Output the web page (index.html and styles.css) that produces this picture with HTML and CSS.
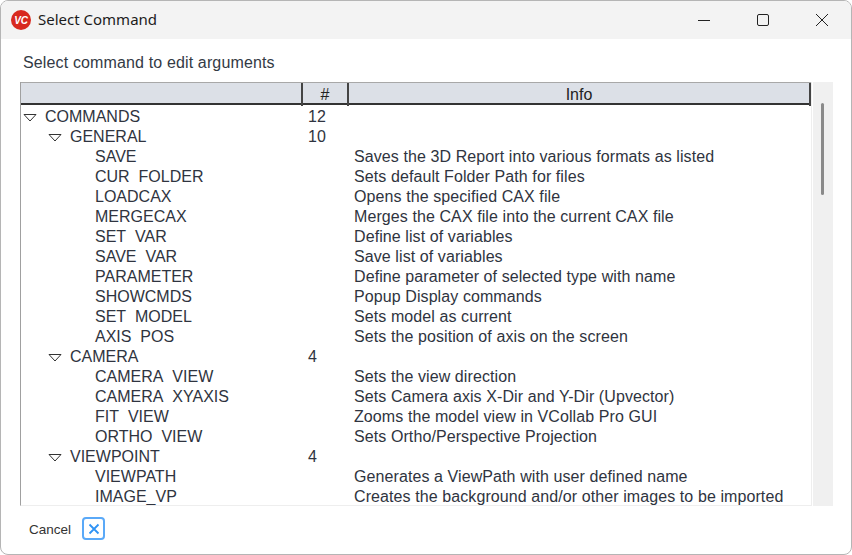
FILE: index.html
```html
<!DOCTYPE html>
<html lang="en">
<head>
<meta charset="utf-8">
<title>Select Command</title>
<link rel="stylesheet" href="styles.css">
</head>
<body>
<div class="window">
  <header class="titlebar">
    <div class="logo"><span>VC</span></div>
    <div class="title">Select Command</div>
    <div class="winctrls">
      <svg class="ctrl" width="14" height="14" viewBox="0 0 14 14"><path d="M1 7.5h12" stroke="#222" fill="none"/></svg>
      <svg class="ctrl" width="14" height="14" viewBox="0 0 14 14"><rect x="1.5" y="1.5" width="11" height="11" rx="1.5" stroke="#222" fill="none"/></svg>
      <svg class="ctrl" width="14" height="14" viewBox="0 0 14 14"><path d="M1 1l12 12M13 1L1 13" stroke="#222" fill="none"/></svg>
    </div>
  </header>
  <main class="content">
    <p class="prompt">Select command to edit arguments</p>
    <div class="treewrap">
      <div class="tree">
        <div class="thead">
          <div class="th"></div>
          <div class="th">#</div>
          <div class="th">Info</div>
        </div>
        <div class="rows">
          <div class="row"><div class="name l0"><svg class="arrow" width="14" height="8" viewBox="0 0 14 8"><path d="M1 .5h12L7 7z" fill="#fff" stroke="#333"/></svg>COMMANDS</div><div class="num">12</div><div class="info"></div></div>
          <div class="row"><div class="name l1"><svg class="arrow" width="14" height="8" viewBox="0 0 14 8"><path d="M1 .5h12L7 7z" fill="#fff" stroke="#333"/></svg>GENERAL</div><div class="num">10</div><div class="info"></div></div>
          <div class="row"><div class="name l2">SAVE</div><div class="num"></div><div class="info">Saves the 3D Report into various formats as listed</div></div>
          <div class="row"><div class="name l2">CUR_FOLDER</div><div class="num"></div><div class="info">Sets default Folder Path for files</div></div>
          <div class="row"><div class="name l2">LOADCAX</div><div class="num"></div><div class="info">Opens the specified CAX file</div></div>
          <div class="row"><div class="name l2">MERGECAX</div><div class="num"></div><div class="info">Merges the CAX file into the current CAX file</div></div>
          <div class="row"><div class="name l2">SET_VAR</div><div class="num"></div><div class="info">Define list of variables</div></div>
          <div class="row"><div class="name l2">SAVE_VAR</div><div class="num"></div><div class="info">Save list of variables</div></div>
          <div class="row"><div class="name l2">PARAMETER</div><div class="num"></div><div class="info">Define parameter of selected type with name</div></div>
          <div class="row"><div class="name l2">SHOWCMDS</div><div class="num"></div><div class="info">Popup Display commands</div></div>
          <div class="row"><div class="name l2">SET_MODEL</div><div class="num"></div><div class="info">Sets model as current</div></div>
          <div class="row"><div class="name l2">AXIS_POS</div><div class="num"></div><div class="info">Sets the position of axis on the screen</div></div>
          <div class="row"><div class="name l1"><svg class="arrow" width="14" height="8" viewBox="0 0 14 8"><path d="M1 .5h12L7 7z" fill="#fff" stroke="#333"/></svg>CAMERA</div><div class="num">4</div><div class="info"></div></div>
          <div class="row"><div class="name l2">CAMERA_VIEW</div><div class="num"></div><div class="info">Sets the view direction</div></div>
          <div class="row"><div class="name l2">CAMERA_XYAXIS</div><div class="num"></div><div class="info">Sets Camera axis X-Dir and Y-Dir (Upvector)</div></div>
          <div class="row"><div class="name l2">FIT_VIEW</div><div class="num"></div><div class="info">Zooms the model view in VCollab Pro GUI</div></div>
          <div class="row"><div class="name l2">ORTHO_VIEW</div><div class="num"></div><div class="info">Sets Ortho/Perspective Projection</div></div>
          <div class="row"><div class="name l1"><svg class="arrow" width="14" height="8" viewBox="0 0 14 8"><path d="M1 .5h12L7 7z" fill="#fff" stroke="#333"/></svg>VIEWPOINT</div><div class="num">4</div><div class="info"></div></div>
          <div class="row"><div class="name l2">VIEWPATH</div><div class="num"></div><div class="info">Generates a ViewPath with user defined name</div></div>
          <div class="row last"><div class="name l2">IMAGE_VP</div><div class="num"></div><div class="info">Creates the background and/or other images to be imported</div></div>
        </div>
      </div>
      <div class="scrollbar"><div class="thumb"></div></div>
    </div>
    <div class="footer">
      <span class="cancel">Cancel</span>
      <button class="cancelbtn" type="button" aria-label="Cancel"><svg width="12" height="12" viewBox="0 0 12 12"><path d="M1.5 1.5l9 9M10.5 1.5l-9 9" stroke="#2f93f5" stroke-width="1.8" fill="none"/></svg></button>
    </div>
  </main>
</div>
</body>
</html>
```
FILE: styles.css
```css
* { box-sizing: border-box; }
html, body { margin: 0; height: 100%; }
body { background: #fff; font-family: "Liberation Sans", Arial, sans-serif; overflow: hidden; }
.window {
  width: 852px; height: 555px; display: flex; flex-direction: column;
  border: 1px solid #b5b5b5; border-radius: 8px; overflow: hidden; background: #fff;
}
.titlebar {
  height: 38px; flex: none; background: #f3f3f3; display: flex; align-items: center;
  padding-left: 10px;
}
.logo {
  width: 20px; height: 20px; border-radius: 50%; background: #d8291f; color: #fff;
  display: flex; align-items: center; justify-content: center;
  font: italic bold 10px "Liberation Sans", sans-serif; letter-spacing: -.3px;
}
.title { margin-left: 7px; margin-top: -2px; font: 15px "Noto Sans", "Open Sans", sans-serif; color: #1c1c1c; }
.winctrls { margin-left: auto; display: flex; align-items: center; gap: 45px; padding-right: 22px; }
.ctrl { display: block; }
.content { flex: 1; display: flex; flex-direction: column; padding: 0 18px 0 19px; min-height: 0; }
.prompt { margin: 15px 0 0 3px; height: 18px; font-size: 16px; letter-spacing: .14px; line-height: 18px; color: #333a45; }
.treewrap { display: flex; margin-top: 10px; height: 424px; flex: none; gap: 1px; }
.tree { width: 793px; border-left: 1px solid #a0a0a0; border-bottom: 1px solid #eee; border-right: 1px solid #eee; overflow: hidden; }
.thead {
  display: grid; grid-template-columns: 282px 46px 462px; height: 23px;
  border-top: 1px solid #a8a8a8; border-bottom: 2px solid #333; background: #dce0e7;
}
.th {
  font-size: 16px; line-height: 23px; text-align: center; color: #222;
  border-right: 2px solid #444;
}
.row { display: grid; grid-template-columns: 282px 46px 462px; height: 20px; }
.row > div { height: 20px; padding-top: 3px; line-height: 18px; font-size: 16px; color: #2f3440; white-space: nowrap; }
.name { display: flex; align-items: flex-start; clip-path: inset(0 0 2px 0); }
.row.last > .name { clip-path: none; }
.arrow { flex: none; margin-right: 8px; margin-top: 6px; }
.l0 { padding-left: 2px; }
.l1 { padding-left: 27px; }
.l2 { padding-left: 74px; }
.num { padding-left: 5px; }
.row > .info { padding-left: 5px; letter-spacing: .09px; }
.scrollbar { width: 20px; background: #f0f0f0; position: relative; padding: 21px 0 0 8px; }
.thumb { width: 3px; height: 92px; background: #8a8a8a; border-radius: 2px; }
.footer { display: flex; align-items: center; padding: 11px 0 0 9px; }
.cancel { font: 13.5px "Liberation Sans", sans-serif; color: #333; margin-top: 1px; }
.cancelbtn {
  margin-left: 11px; width: 23px; height: 23px; padding: 0; display: flex; align-items: center; justify-content: center;
  background: #fff; border: 2px solid #5aa9f8; border-radius: 4px;
}
```
